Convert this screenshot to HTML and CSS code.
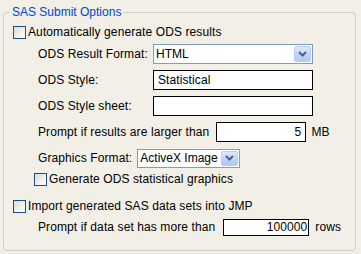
FILE: index.html
```html
<!DOCTYPE html>
<html>
<head>
<meta charset="utf-8">
<link rel="stylesheet" href="styles.css">
</head>
<body>
<fieldset class="panel">
  <legend class="panel-title">SAS Submit Options</legend>

  <div class="check-row top-check">
    <span class="checkbox"></span>
    <span>Automatically generate ODS results</span>
  </div>

  <div class="ods-group">
    <div class="form-row">
      <span class="label fixed">ODS Result Format:</span>
      <div class="combo combo-wide">
        <span class="combo-value">HTML</span>
        <span class="combo-btn"><svg width="9" height="6" viewBox="0 0 9 6"><path d="M1 1 L4.5 4.5 L8 1" fill="none" stroke="#4D6185" stroke-width="2"/></svg></span>
      </div>
    </div>
    <div class="form-row">
      <span class="label fixed">ODS Style:</span>
      <div class="textbox box-wide">Statistical</div>
    </div>
    <div class="form-row">
      <span class="label fixed">ODS Style sheet:</span>
      <div class="textbox box-wide"></div>
    </div>
    <div class="form-row">
      <span class="label">Prompt if results are larger than</span>
      <div class="textbox box-num">5</div>
      <span class="label">MB</span>
    </div>
    <div class="form-row">
      <span class="label">Graphics Format:</span>
      <div class="combo combo-small">
        <span class="combo-value">ActiveX Image</span>
        <span class="combo-btn"><svg width="9" height="6" viewBox="0 0 9 6"><path d="M1 1 L4.5 4.5 L8 1" fill="none" stroke="#4D6185" stroke-width="2"/></svg></span>
      </div>
    </div>
  </div>

  <div class="check-row sub-check">
    <span class="checkbox"></span>
    <span>Generate ODS statistical graphics</span>
  </div>

  <div class="check-row import-check">
    <span class="checkbox"></span>
    <span>Import generated SAS data sets into JMP</span>
  </div>

  <div class="form-row rows-row">
    <span class="label">Prompt if data set has more than</span>
    <div class="textbox box-rows">100000</div>
    <span class="label rows-unit">rows</span>
  </div>
</fieldset>
</body>
</html>
```

FILE: styles.css
```css
html, body {
  margin: 0;
  padding: 0;
}
body {
  width: 361px;
  height: 254px;
  overflow: hidden;
  background: #F1EFE6;
  font-family: "Liberation Sans", Arial, sans-serif;
  font-size: 12px;
  letter-spacing: 0.1px;
  color: #000;
}
.panel {
  box-sizing: border-box;
  width: 353px;
  height: 246px;
  margin: 5px 0 0 3px;
  padding: 0 6px 13px 6px;
  border: 1px solid #D0D0BF;
  border-radius: 4px;
  min-width: 0;
}
.panel-title {
  padding: 0 2px;
  line-height: 15px;
  color: #0046D5;
  letter-spacing: 0;
}
.check-row {
  display: flex;
  align-items: center;
  gap: 2px;
  height: 16px;
}
.top-check {
  margin-top: 4px;
  padding-left: 3px;
}
.checkbox {
  box-sizing: border-box;
  width: 13px;
  height: 13px;
  flex: none;
  border: 1px solid #1C5180;
  background: linear-gradient(135deg, #DCDCD6 0%, #F4F4F2 70%, #FFFFFF 100%);
}
.ods-group {
  display: flex;
  flex-direction: column;
  gap: 6px;
  margin-top: 4px;
  padding-left: 28px;
}
.form-row {
  display: flex;
  align-items: center;
  gap: 5px;
  height: 20px;
}
.label {
  white-space: nowrap;
}
.label.fixed {
  width: 110px;
}
.textbox {
  box-sizing: border-box;
  height: 20px;
  border: 1px solid #000;
  background: #fff;
  padding: 0 4px;
  display: flex;
  align-items: center;
}
.box-wide {
  width: 160px;
}
.box-num {
  width: 90px;
  margin-left: 2px;
  justify-content: flex-end;
}
.combo {
  box-sizing: border-box;
  display: flex;
  align-items: center;
  justify-content: space-between;
  border: 1px solid #7F9DB9;
  background: #fff;
  padding: 0 1px 0 2px;
}
.combo-value {
  letter-spacing: 0;
  white-space: nowrap;
}
.combo-wide {
  width: 160px;
  height: 20px;
}
.combo-small {
  width: 103px;
  height: 19px;
}
.combo-btn {
  box-sizing: border-box;
  width: 17px;
  height: calc(100% - 2px);
  flex: none;
  display: flex;
  align-items: center;
  justify-content: center;
  border: 1px solid #BACCF6;
  border-radius: 2px;
  background: linear-gradient(#DCE6FD, #C0D2FA 60%, #B2C8F7);
}
.sub-check {
  margin-top: 3px;
  padding-left: 24px;
}
.import-check {
  margin-top: 11px;
  padding-left: 3px;
}
.rows-row {
  margin-top: 4px;
  padding-left: 28px;
  height: 18px;
}
.box-rows {
  width: 86px;
  height: 17px;
  margin-left: 3px;
  padding: 0 1px;
  justify-content: flex-end;
}
.rows-unit {
  margin-left: 1px;
}
```
